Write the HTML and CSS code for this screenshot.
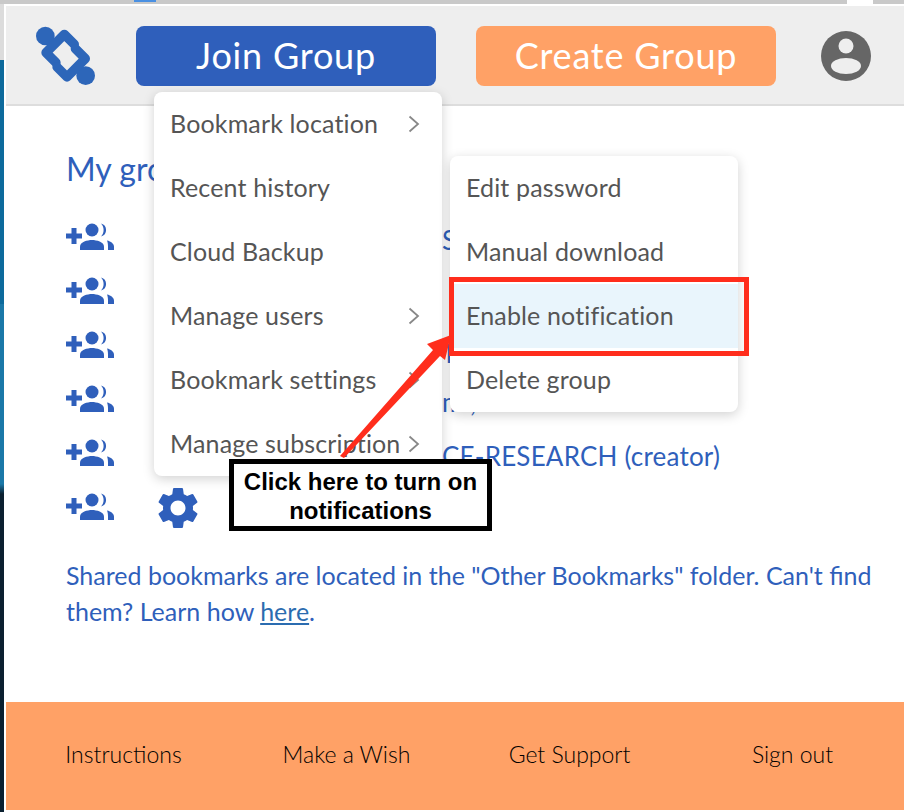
FILE: index.html
```html
<!DOCTYPE html>
<html lang="en">
<head>
<meta charset="utf-8">
<title>Groups</title>
<link rel="stylesheet" href="styles.css">
</head>
<body>
<svg class="sprites" width="0" height="0" aria-hidden="true">
  <symbol id="add-group" viewBox="0 0 49 28">
    <path d="M5.500 5h5v5.500h5.500v5h-5.500v5.500h-5v-5.500h-5.500v-5h5.500z"/>
    <circle cx="26" cy="7" r="6.500"/>
    <path d="M14 27v-3.500c0-4.500 7.500-6.500 12-6.500s12 2 12 6.500v3.500z"/>
    <path d="M35 .6a6.700 6.700 0 0 1 0 13c1.800-1.800 2.600-4 2.600-6.500s-.8-4.700-2.600-6.500z"/>
    <path d="M41 17.500c4 .8 7 3.200 7 6.200v3.300h-6v-3.500c0-2.400-.3-4.300-1-6z"/>
  </symbol>
  <symbol id="gear" viewBox="0 0 24 24">
    <path d="M19.140 12.940c.04-.3.060-.61.060-.94 0-.32-.02-.64-.07-.94l2.030-1.580c.18-.14.23-.41.120-.61l-1.920-3.320c-.12-.22-.37-.29-.59-.22l-2.390.96c-.5-.38-1.030-.7-1.620-.94l-.36-2.540c-.04-.24-.24-.41-.48-.41h-3.840c-.24 0-.43.170-.47.410l-.36 2.540c-.59.240-1.130.570-1.620.940l-2.390-.96c-.22-.08-.47 0-.59.220L2.740 8.870c-.12.210-.08.470.120.610l2.030 1.580c-.05.3-.09.630-.09.940s.02.640.070.940l-2.030 1.580c-.18.140-.23.410-.12.610l1.920 3.320c.12.220.37.290.59.220l2.390-.96c.5.380 1.030.7 1.620.940l.36 2.540c.05.240.24.410.48.410h3.840c.24 0 .44-.17.47-.41l.36-2.540c.59-.24 1.130-.56 1.620-.94l2.390.96c.22.080.47 0 .59-.22l1.920-3.320c.12-.22.070-.47-.12-.61l-2.010-1.580zM12 15.600c-1.980 0-3.600-1.620-3.600-3.600s1.620-3.600 3.600-3.600 3.600 1.620 3.600 3.600-1.620 3.600-3.600 3.600z"/>
  </symbol>
  <symbol id="chevron" viewBox="0 0 12 18">
    <path d="M1.500 1.500L10 9l-8.500 7.500" fill="none" stroke="#888" stroke-width="1.800"/>
  </symbol>
</svg>

<div class="browser-strip">
  <span class="strip-tab"></span>
  <span class="strip-notch"></span>
</div>

<div class="shell">
  <div class="desktop-edge"></div>
  <div class="popup">
    <header class="header">
      <svg class="logo" viewBox="48 48 180 180" aria-label="Logo">
        <circle cx="76" cy="78" r="28" class="logo-fill"/>
        <circle cx="197" cy="197" r="28" class="logo-fill"/>
        <path class="logo-line" d="M163 103L133 73L78 128L108 158"/>
        <path class="logo-line" d="M111 171L141 201L196 146L166 116"/>
      </svg>
      <button class="btn btn-join">Join Group</button>
      <button class="btn btn-create">Create Group</button>
      <svg class="account" viewBox="0 0 50 50" aria-label="Account">
        <circle cx="25" cy="25" r="25" fill="#666"/>
        <circle cx="25" cy="15" r="7.500" fill="#eee"/>
        <ellipse cx="25" cy="35" rx="15" ry="8" fill="#eee"/>
      </svg>
    </header>

    <main class="main">
      <h2 class="title">My groups</h2>
      <ul class="groups">
        <li class="group"><svg class="ico-add"><use href="#add-group"/></svg><svg class="ico-gear"><use href="#gear"/></svg><span class="group-name">S</span></li>
        <li class="group"><svg class="ico-add"><use href="#add-group"/></svg><svg class="ico-gear"><use href="#gear"/></svg></li>
        <li class="group"><svg class="ico-add"><use href="#add-group"/></svg><svg class="ico-gear"><use href="#gear"/></svg><span class="group-name group-name-p">p</span></li>
        <li class="group"><svg class="ico-add"><use href="#add-group"/></svg><svg class="ico-gear"><use href="#gear"/></svg><span class="group-name">m.,.</span></li>
        <li class="group"><svg class="ico-add"><use href="#add-group"/></svg><svg class="ico-gear"><use href="#gear"/></svg><span class="group-name">CE-RESEARCH (creator)</span></li>
        <li class="group"><svg class="ico-add"><use href="#add-group"/></svg><svg class="ico-gear"><use href="#gear"/></svg></li>
      </ul>
      <p class="note">Shared bookmarks are located in the "Other Bookmarks" folder. Can't find them? Learn how <a class="note-link" href="#">here</a>.</p>
    </main>

    <footer class="footer">
      <a class="foot-link">Instructions</a>
      <a class="foot-link">Make a Wish</a>
      <a class="foot-link">Get Support</a>
      <a class="foot-link">Sign out</a>
    </footer>
  </div>
</div>

<ul class="menu menu-main">
  <li class="menu-item">Bookmark location<svg class="chev"><use href="#chevron"/></svg></li>
  <li class="menu-item">Recent history</li>
  <li class="menu-item">Cloud Backup</li>
  <li class="menu-item">Manage users<svg class="chev"><use href="#chevron"/></svg></li>
  <li class="menu-item">Bookmark settings<svg class="chev"><use href="#chevron"/></svg></li>
  <li class="menu-item">Manage subscription<svg class="chev"><use href="#chevron"/></svg></li>
</ul>

<ul class="menu menu-sub">
  <li class="menu-item">Edit password</li>
  <li class="menu-item">Manual download</li>
  <li class="menu-item is-active">Enable notification</li>
  <li class="menu-item">Delete group</li>
</ul>

<div class="red-box"></div>
<svg class="arrow" viewBox="0 0 120 130" aria-hidden="true">
  <path d="M2 124L6 126L102 24L107 28L113 3L89 12L95 18z" fill="#ff2d1c"/>
</svg>
<div class="callout">Click here to turn on notifications</div>
</body>
</html>
```
FILE: styles.css
```css
* { box-sizing: border-box; }

html, body {
  margin: 0;
  width: 904px;
  height: 812px;
  overflow: hidden;
}

body {
  position: relative;
  display: flex;
  flex-direction: column;
  font-family: "Lato", "Liberation Sans", sans-serif;
  background: #fff;
}

.sprites { position: absolute; }

.browser-strip {
  flex: none;
  height: 4px;
  display: flex;
  background: #c9c9c9;
}

.strip-tab {
  width: 22px;
  height: 2px;
  margin-left: 134px;
  background: #4a90e2;
}

.strip-notch {
  width: 26px;
  margin-left: 691px;
  background: #fff;
}

.shell {
  flex: 1;
  display: flex;
  min-height: 0;
}

.desktop-edge {
  flex: none;
  width: 4px;
  background: linear-gradient(#dcdcdc 0 56px, #0d6a9c 56px 300px, #1a78a8 300px 480px, #0b2030 490px);
}

.popup {
  flex: 1;
  min-width: 0;
  display: flex;
  flex-direction: column;
  padding: 2px 0 2px 2px;
  background: #fff;
}

.header {
  flex: none;
  height: 100px;
  display: flex;
  align-items: flex-start;
  gap: 40px;
  padding: 20px 0 0 30px;
  background: #eee;
  border-bottom: 2px solid #ddd;
}

.logo { width: 60px; height: 60px; flex: none; }
.logo-fill { fill: #2d66b9; }
.logo-line {
  fill: none;
  stroke: #2d66b9;
  stroke-width: 28;
  stroke-linecap: round;
  stroke-linejoin: round;
}

.btn {
  width: 300px;
  height: 60px;
  flex: none;
  padding: 0 0 2px;
  border: 0;
  border-radius: 8px;
  color: #fff;
  font-family: inherit;
  font-size: 36px;
  letter-spacing: .8px;
}

.btn-join { background: #2f5fbb; }
.btn-create { background: #ffa166; }

.account {
  width: 50px;
  height: 50px;
  flex: none;
  margin: 5px 0 0 5px;
}

.main {
  flex: 1;
  padding: 43px 30px 0 60px;
  color: #2f5fbb;
}

.title {
  margin: 0;
  font-size: 32px;
  font-weight: 400;
  line-height: 40px;
}

.groups {
  list-style: none;
  margin: 22px 0 0;
  padding: 0;
}

.group {
  height: 54px;
  display: flex;
  align-items: center;
}

.ico-add { width: 49px; height: 28px; fill: #2f5fbb; flex: none; margin-top: -2px; }
.ico-gear { width: 50px; height: 50px; fill: #2f5fbb; flex: none; margin-left: 38px; }

.group-name {
  margin: 4px 0 0 239px;
  font-size: 26px;
  letter-spacing: .2px;
  white-space: nowrap;
}

.group-name-p { margin-left: 243px; }

.note {
  margin: 22px 0 0;
  font-size: 25px;
  line-height: 36px;
}

.note-link {
  color: #2b6cb0;
  text-decoration: underline;
}

.footer {
  flex: none;
  height: 108px;
  display: grid;
  grid-template-columns: repeat(4, 1fr);
  align-items: center;
  padding: 0 0 4px 6px;
  background: #ffa166;
}

.foot-link {
  text-align: center;
  color: #000;
  font-size: 23px;
  font-weight: 300;
}

.menu {
  position: absolute;
  width: 288px;
  margin: 0;
  padding: 0;
  list-style: none;
  background: #fff;
  border-radius: 8px;
  box-shadow: 0 3px 12px rgba(0, 0, 0, .18);
  overflow: hidden;
}

.menu-main { left: 154px; top: 92px; }
.menu-sub { left: 450px; top: 156px; }

.menu-item {
  height: 64px;
  display: flex;
  align-items: center;
  justify-content: space-between;
  padding: 0 22px 3px 16px;
  color: #555;
  font-size: 25px;
  letter-spacing: .15px;
}

.menu-item.is-active { background: #e9f5fc; }

.chev { width: 12px; height: 18px; flex: none; margin-top: 3px; }

.red-box {
  position: absolute;
  left: 449px;
  top: 277px;
  width: 300px;
  height: 79px;
  border: 5px solid #ff2d1c;
}

.arrow {
  position: absolute;
  left: 338px;
  top: 332px;
  width: 120px;
  height: 130px;
}

.callout {
  position: absolute;
  left: 229px;
  top: 459px;
  width: 263px;
  height: 72px;
  padding: 3px 8px 0;
  border: 5px solid #000;
  background: #fff;
  color: #000;
  font-family: "Liberation Sans", Arial, sans-serif;
  font-size: 24px;
  font-weight: 700;
  line-height: 29px;
  text-align: center;
}
```
